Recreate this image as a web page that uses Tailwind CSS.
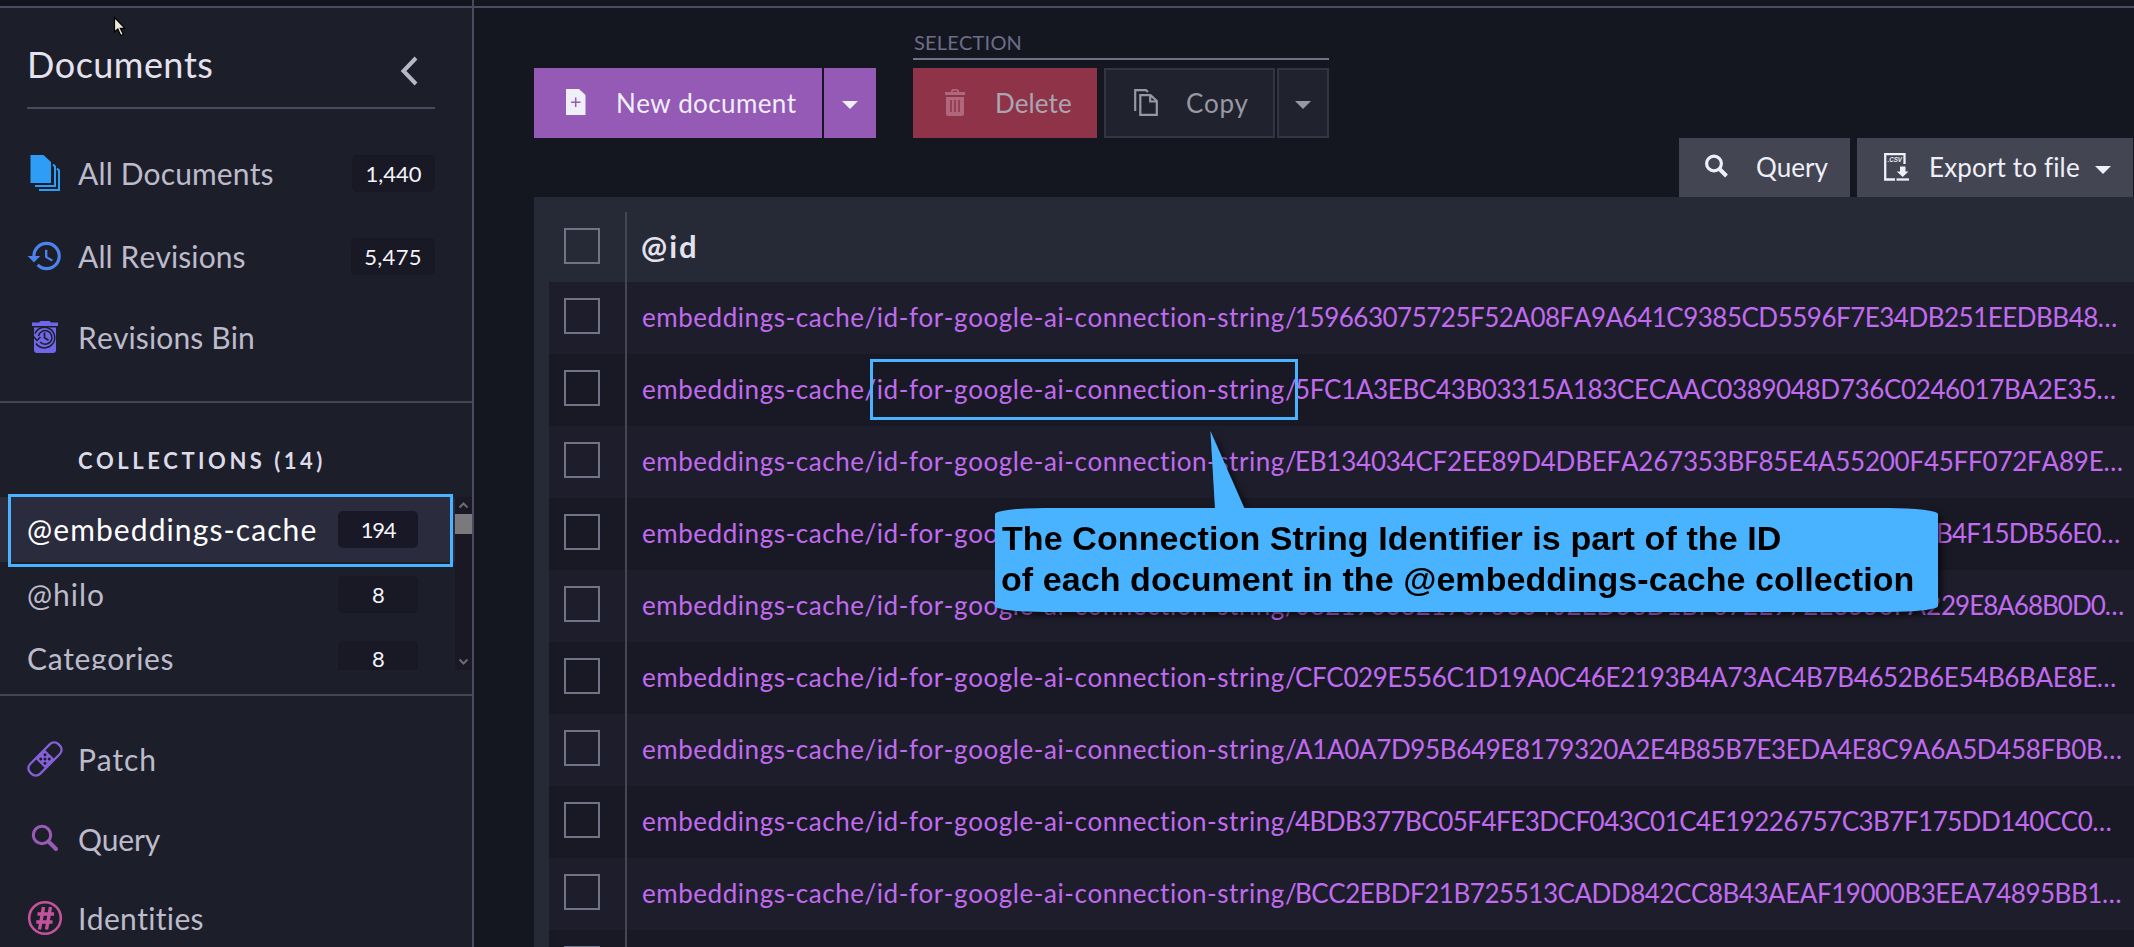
<!DOCTYPE html>
<html lang="en">
<head>
<meta charset="utf-8">
<title>Documents</title>
<script src="https://cdn.jsdelivr.net/npm/@tailwindcss/browser@4"></script>
</head>
<body class="relative flex h-[947px] w-[2134px] flex-col overflow-hidden bg-[#141620] font-['Lato','Open_Sans',sans-serif] text-[26px] text-[#bdbbcb] [font-kerning:none]">
<div class="flex h-[8px] shrink-0 border-b-2 border-[#4a4a60]"><div class="h-[6px] w-[472px] bg-[#13141e]"></div><div class="h-[6px] w-[2px] bg-[#4a4a5e]"></div></div>
<div class="flex min-h-0 flex-1">

<!-- Sidebar -->
<aside class="flex w-[474px] shrink-0 flex-col overflow-hidden border-r-2 border-[#4a4a5e] bg-[#1c1e2a] whitespace-nowrap">
  <section class="flex h-[395px] shrink-0 flex-col border-b-2 border-[#444656] pr-[37px] pl-[27px]">
    <div class="flex h-[101px] shrink-0 items-start justify-between border-b-2 border-[#4a4a5e]">
      <h1 class="mt-[35px] text-[36px] leading-[43px] tracking-[0.45px] text-[#e4e2ee]">Documents</h1>
      <svg class="mt-[47px] mr-[16px]" width="20" height="32" viewBox="0 0 20 32" fill="none" stroke="#b9b7c7" stroke-width="4"><path d="M17 3 4.500 16 17 29"/></svg>
    </div>
    <nav class="flex flex-col pt-[22px]">
      <a class="flex h-[84px] items-center">
        <svg class="-mt-[1px]" width="36" height="38" viewBox="0 0 36 38" fill="none" stroke="#2e9df5" stroke-width="2"><path d="M3.500 1h13L24 8v21H3.500z" fill="#2e9df5" stroke="none"/><path d="M26 10.500l2 2V32H8M30 14.500l2 2V36H12"/></svg>
        <span class="ml-[15px] text-[30px] leading-9 tracking-[0.13px]">All Documents</span>
        <span class="ml-auto flex h-[37px] w-[83px] items-center justify-center rounded-[5px] bg-[#191825] text-[22px] text-[#f4f3fa]">1,440</span>
      </a>
      <a class="flex h-[82px] items-center">
        <svg class="-ml-[1px]" width="38" height="38" viewBox="0 0 24 24" fill="#4c83ee"><path d="M13 3a9 9 0 0 0-9 9H1l3.890 3.890.07.14L9 12H6c0-3.870 3.130-7 7-7s7 3.130 7 7-3.130 7-7 7c-1.930 0-3.680-.79-4.940-2.060l-1.420 1.420A8.954 8.954 0 0 0 13 21a9 9 0 0 0 0-18zm-1 5v5l4.280 2.540.72-1.210-3.500-2.080V8H12z"/></svg>
        <span class="ml-[14px] text-[30px] leading-9 tracking-[0.1px]">All Revisions</span>
        <span class="ml-auto flex h-[37px] w-[84px] items-center justify-center rounded-[5px] bg-[#191825] text-[22px] tracking-[0.3px] text-[#f4f3fa]">5,475</span>
      </a>
      <a class="flex h-[80px] items-center">
        <svg width="36" height="34" viewBox="0 0 36 34" fill="#6f66e8"><path d="M5 2.500h7L13.500 1h9L24 2.500h7V6H5zM7 7.500h22V30a3 3 0 0 1-3 3H10a3 3 0 0 1-3-3z"/><g fill="none" stroke="#1c1e2a" stroke-width="1.500"><path d="M8 13.500a10.300 10.300 0 1 1 1 10"/><path d="M11.500 16a6.800 6.800 0 1 1 1.600 6"/><path d="M6.500 16.500l3.500 4 3.500-3.500"/><path d="M17.500 12.500v5.300l4 2.400" stroke-width="1.700"/></g></svg>
        <span class="ml-[15px] text-[30px] leading-9 tracking-[0.13px]">Revisions Bin</span>
      </a>
    </nav>
  </section>

  <section class="flex h-[293px] shrink-0 flex-col border-b-2 border-[#444656]">
    <h2 class="h-[94px] pt-[44px] pl-[78px] text-[22px] leading-7 font-bold tracking-[3.5px] text-[#dcdae8]">COLLECTIONS (14)</h2>
    <div class="flex h-[173px] overflow-hidden">
      <div class="w-[455px]">
        <div class="flex h-[65px] items-center bg-[#2a2b3c] pl-[27px] text-white">
          <span class="w-[311px] pb-[2px] text-[30px] leading-9 tracking-[1.1px]">@embeddings-cache</span>
          <span class="flex h-[37px] w-[80px] items-center justify-center rounded-[5px] bg-[#181826] text-[22px] tracking-[-1.3px] text-[#f4f3fa]">194</span>
        </div>
        <div class="flex h-[65px] items-center pl-[27px]">
          <span class="w-[311px] pb-[2px] text-[30px] leading-9 tracking-[1px]">@hilo</span>
          <span class="flex h-[37px] w-[80px] items-center justify-center rounded-[5px] bg-[#191825] pl-px text-[22px] text-[#f4f3fa]">8</span>
        </div>
        <div class="flex h-[65px] items-center pl-[27px]">
          <span class="w-[311px] pb-[3px] text-[30px] leading-9 tracking-[0.6px]">Categories</span>
          <span class="flex h-[37px] w-[80px] items-center justify-center rounded-[5px] bg-[#191825] pb-[2px] pl-px text-[22px] text-[#f4f3fa]">8</span>
        </div>
      </div>
      <div class="flex w-[17px] flex-col justify-between bg-[#191824]">
        <div>
          <svg width="17" height="17" viewBox="0 0 17 17" fill="none" stroke="#6b6b70" stroke-width="2"><path d="M4.500 10.500l4-4 4 4"/></svg>
          <div class="h-[20px] bg-[#7a7a7c]"></div>
        </div>
        <svg width="17" height="17" viewBox="0 0 17 17" fill="none" stroke="#6b6b70" stroke-width="2"><path d="M4.500 6.500l4 4 4-4"/></svg>
      </div>
    </div>
  </section>

  <nav class="flex flex-col pt-[22px] pl-[27px]">
    <a class="flex h-[80px] items-center">
      <svg class="mt-[2px]" width="36" height="36" viewBox="0 0 36 36" fill="none" stroke="#8560d8" stroke-width="2.300"><g transform="rotate(-45 18 18)"><rect x="-2" y="11" width="40" height="14" rx="6"/><path d="M11.500 11h13v14h-13z" fill="#8560d8" stroke="none"/><g fill="#1c1e2a" stroke="none"><circle cx="15" cy="15" r="1.500"/><circle cx="21" cy="15" r="1.500"/><circle cx="18" cy="18" r="1.500"/><circle cx="15" cy="21" r="1.500"/><circle cx="21" cy="21" r="1.500"/></g></g></svg>
      <span class="ml-[15px] pt-[2px] text-[30px] leading-9 tracking-[0.8px]">Patch</span>
    </a>
    <a class="flex h-[80px] items-center">
      <svg width="36" height="36" viewBox="0 0 36 36" fill="none" stroke="#995bb5"><circle cx="15" cy="15" r="8.700" stroke-width="3"/><path d="M21.500 21.500 29 29" stroke-width="4" stroke-linecap="round"/></svg>
      <span class="ml-[15px] pt-[2px] text-[30px] leading-9 tracking-[-0.2px]">Query</span>
    </a>
    <a class="flex h-[79px] items-center">
      <svg width="36" height="36" viewBox="0 0 36 36" fill="none" stroke="#c2539c"><circle cx="18" cy="18" r="15.800" stroke-width="2.600"/><path d="M16.500 7 12.500 29.500M23.500 7l-4 22.500M10.500 14h16.500M9.300 22h16.200" stroke-width="3.400"/></svg>
      <span class="ml-[15px] text-[30px] leading-9 tracking-[0.34px]">Identities</span>
    </a>
  </nav>
</aside>

<!-- Main -->
<main class="flex min-w-0 flex-1 flex-col pl-[60px] whitespace-nowrap">
  <div class="flex h-[130px] shrink-0 items-start">
    <div class="mt-[60px] flex gap-[2px] text-[#efeff8]">
      <button class="flex h-[70px] w-[288px] items-center bg-[#955ab5] pl-[32px]">
        <svg class="-mt-[2px]" width="20" height="26" viewBox="0 0 20 26"><path d="M0 0h13l6.500 6v20H0z" fill="#efeff8"/><path d="M5 13.200h9.500M9.700 8.500v9.500" stroke="#955ab5" stroke-width="1.500"/></svg>
        <span class="ml-[30px] tracking-[0.38px]">New document</span>
      </button>
      <button class="flex h-[70px] w-[52px] items-center justify-center bg-[#955ab5] pt-[4px]"><svg width="16" height="8" viewBox="0 0 16 8"><path d="M0 0h16L8 8z" fill="#efeff8"/></svg></button>
    </div>
    <div class="ml-[37px] w-[416px]">
      <div class="flex h-[52px] items-end border-b-2 border-[#717085] pb-[4px] pl-px text-[20px] leading-6 tracking-[0.2px] text-[#6d6e88]">SELECTION</div>
      <div class="mt-[8px] flex text-[#9798a3]">
        <button class="flex h-[70px] w-[184px] items-center bg-[#8f3349] pl-[32px] text-[#a9a6b2]">
          <svg class="-mt-[2px]" width="20" height="27" viewBox="0 0 20 27"><path d="M0 3h6V1.500L7.500 0h5L14 1.500V3h6v3H0zM8 1.800V3h4V1.800zM1 8h18v17a2 2 0 0 1-2 2H3a2 2 0 0 1-2-2z" fill="#b0667c" fill-rule="evenodd"/><path d="M6 11v12M10 11v12M14 11v12" stroke="#8f3349" stroke-width="1.500"/></svg>
          <span class="ml-[30px] tracking-[0.05px]">Delete</span>
        </button>
        <button class="ml-[7px] flex h-[70px] w-[171px] items-center border-2 border-[#333543] bg-[#20222e] pl-[28px]">
          <svg class="-mt-[2px]" width="24" height="27" viewBox="0 0 24 27" fill="none" stroke="#9798a3" stroke-width="2.200"><path d="M1.200 22V1.200H12l2 1.800M6.300 6.200h10.200L22.800 12v13.800H6.300zM16.200 6.500v6h6.500"/></svg>
          <span class="ml-[28px] tracking-[0.64px]">Copy</span>
        </button>
        <button class="ml-[2px] flex h-[70px] w-[52px] items-center justify-center border-2 border-[#333543] bg-[#20222e] pt-[4px]"><svg width="16" height="8" viewBox="0 0 16 8"><path d="M0 0h16L8 8z" fill="#9798a3"/></svg></button>
      </div>
    </div>
  </div>

  <div class="flex h-[59px] shrink-0 justify-end gap-[7px] pr-[1px] text-[#efeff8]">
    <button class="flex h-[59px] w-[171px] items-center bg-[#434553] pl-[26px]">
      <svg class="-mt-[3px]" width="23" height="24" viewBox="0 0 23 24" fill="none" stroke="#efeff8"><circle cx="9" cy="9.500" r="7.400" stroke-width="3.200"/><path d="M14.500 15l7 7" stroke-width="4"/></svg>
      <span class="ml-[28px]">Query</span>
    </button>
    <button class="flex h-[59px] w-[276px] items-center bg-[#434553] pr-[22px] pl-[27px]">
      <svg class="-mt-[2px]" width="25" height="28" viewBox="0 0 25 28"><path d="M20.500 11V1.200H1.200v25.300H11" fill="none" stroke="#efeff8" stroke-width="2.300"/><path d="M12.500 26.500H25" stroke="#efeff8" stroke-width="2.300"/><path d="M16 13.500h5.500v5H24.500L18.700 24l-6-5.500H16z" fill="#efeff8"/><text x="3.500" y="9.300" font-family="Liberation Sans" font-style="italic" font-weight="700" font-size="7.500" fill="#efeff8" textLength="14.500" lengthAdjust="spacingAndGlyphs">.CSV</text></svg>
      <span class="ml-[20px] tracking-[0.15px]">Export to file</span>
      <svg class="mt-[4px] ml-auto" width="16" height="8" viewBox="0 0 16 8"><path d="M0 0h16L8 8z" fill="#efeff8"/></svg>
    </button>
  </div>

  <!-- Table -->
  <div class="flex min-h-0 flex-1 flex-col overflow-hidden bg-[#262a36] pl-[15px]">
    <div class="flex h-[85px] shrink-0 items-end">
      <div class="flex h-[70px] w-[76px] items-start pt-[16px] pl-[15px]"><i class="size-[36px] border-2 border-[#717386]"></i></div>
      <div class="flex h-[70px] flex-1 items-start border-l-2 border-[#444653] pt-[15px] pl-[14px] text-[31px] leading-[38px] font-bold tracking-[2px] text-[#e4e2ee]">@id</div>
    </div>
    <div id="rows" class="text-[#c06bf0]"></div>
  </div>
</main>
</div>

<!-- Annotations -->
<div class="absolute top-[494px] left-[8px] h-[73px] w-[445px] border-3 border-[#49b3ff]"></div>
<div class="absolute top-[359px] left-[870px] h-[61px] w-[428px] border-3 border-[#49b3ff]"></div>
<div class="absolute top-[430px] left-[995px] h-[182px] w-[943px] drop-shadow-[4px_4px_3px_rgba(0,0,0,0.6)]">
  <svg class="absolute top-0 left-[215px]" width="36" height="80" viewBox="0 0 36 80"><path d="M.4.700 5 79.500h30z" fill="#49b3ff"/></svg>
  <div class="absolute top-[78px] left-0 h-[104px] w-[943px] rounded-[50px/6px] bg-[#49b3ff] pt-[10px] pl-[6px] font-['Liberation_Sans',Arial,sans-serif] text-[34px] leading-[41px] font-bold tracking-[0.07px] whitespace-nowrap text-black"><span class="pl-px tracking-[0.1px]">The Connection String Identifier is part of the ID</span><br>of each document in the @embeddings-cache collection</div>
</div>
<svg class="absolute top-[16px] left-[113px]" width="14" height="22" viewBox="0 0 14 22"><path d="M1.500 1.500v14.500l3.300-3 3 6.500 2.500-1.200-3-6H12z" fill="#ece8da" stroke="#000" stroke-width="1.200"/></svg>

<script>
const ids = [
  ["159663075725F52A08FA9A641C9385CD5596F7E34DB251EEDBB48…", "tracking-[-0.50px]"],
  ["5FC1A3EBC43B03315A183CECAAC0389048D736C0246017BA2E35…", "tracking-[-0.35px]"],
  ["EB134034CF2EE89D4DBEFA267353BF85E4A55200F45FF072FA89E…", "tracking-[-0.23px]"],
  ["B4F15DB56E0…", "tracking-[-0.80px]", "7A2C91E05D38F64B1C0E92A7D5F3681B04CE7D92A", "w-[641px]"],
  ["29E8A68B0D0…", "tracking-[-1px]", "0821933821937533402ED58D1BF672E972E8553FA27C", "w-[646px]"],
  ["CFC029E556C1D19A0C46E2193B4A73AC4B7B4652B6E54B6BAE8E…", "tracking-[-0.35px]"],
  ["A1A0A7D95B649E8179320A2E4B85B7E3EDA4E8C9A6A5D458FB0B…", "tracking-[-0.36px]"],
  ["4BDB377BC05F4FE3DCF043C01C4E19226757C3B7F175DD140CC0…", "tracking-[-0.52px]"],
  ["BCC2EBDF21B725513CADD842CC8B43AEAF19000B3EEA74895BB1…", "tracking-[-0.46px]"],
  ["", "tracking-normal"]
];
document.getElementById("rows").innerHTML = ids.map(([id, tr, lead, w], i) => `
  <div class="flex h-[72px] ${i % 2 ? "bg-[#191925]" : "bg-[#1e1d2b]"}">
    <div class="w-[76px] pt-[16px] pl-[15px]"><i class="block size-[36px] border-2 border-[#717386]"></i></div>
    <div class="flex flex-1 items-center border-l-2 border-[#444653] pb-px pl-[15px]">
      ${id ? `<span class="w-[653px] tracking-[0.55px]">embeddings-cache/id-for-google-ai-connection-string/</span>` : ""}
      ${lead ? `<span class="${w} overflow-hidden">${lead}</span>` : ""}
      <span class="${tr}">${id}</span>
    </div>
  </div>`).join("");
</script>
</body>
</html>
